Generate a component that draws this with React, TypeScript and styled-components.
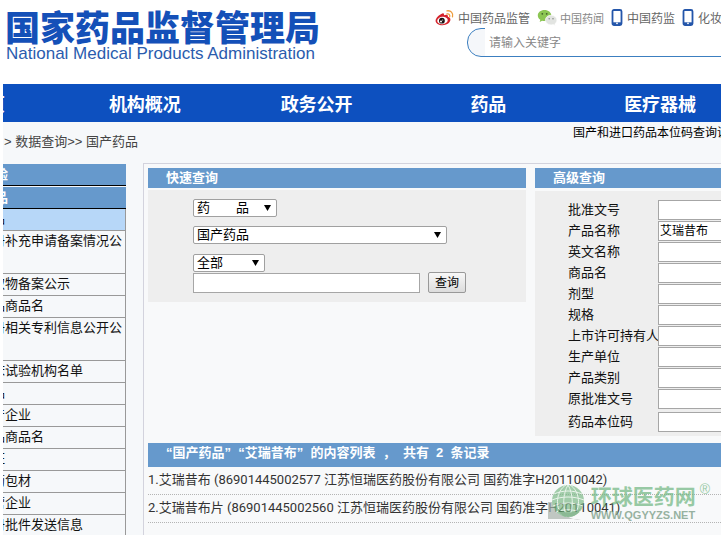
import React from "react";
import styled, { createGlobalStyle, css } from "styled-components";

const cjk = `"Noto Sans CJK SC", sans-serif`;

const GlobalStyle = createGlobalStyle`
  *, *::before, *::after { box-sizing: border-box; }
  html { overflow: hidden; }
  body {
    margin: 0;
    background: #fff;
    color: #222;
    font: 13px/20px Roboto, ${cjk};
  }
  a { color: inherit; text-decoration: none; }
  ul, ol { list-style: none; margin: 0; padding: 0; }
  h1, h2, p { margin: 0; }
  input, select, button { font: inherit; color: inherit; border-radius: 0; margin: 0; }
`;

const Page = styled.div`
  margin: 0 0 2px 3px;
  overflow: hidden;
`;

const Header = styled.header`
  display: flex;
  justify-content: space-between;
  height: 84px;
`;

const Brand = styled.a`
  display: block;
  padding: 7px 0 0 2px;
  white-space: nowrap;
`;

const BrandName = styled.h1`
  color: #1450b8;
  font: 900 35px/38px ${cjk};
`;

const BrandSub = styled.p`
  padding-left: 1px;
  color: #2a5cae;
  font: 17px/18px "Liberation Sans", sans-serif;
`;

const Tools = styled.div`
  flex: none;
  width: 286px;
  padding-top: 7px;
  overflow: hidden;
`;

const Social = styled.ul`
  display: flex;
  align-items: center;
  gap: 7px;
  height: 21px;
`;

const SocialLink = styled.a<{ $small?: boolean }>`
  display: flex;
  align-items: center;
  gap: ${(p) => (p.$small ? 2 : 4)}px;
  color: ${(p) => (p.$small ? "#888" : "#666")};
  font: ${(p) => (p.$small ? 11 : 12)}px/20px ${cjk};
  white-space: nowrap;
  svg { flex: none; display: block; }
`;

const SearchBox = styled.label`
  display: flex;
  height: 29px;
  margin: 0 -20px 0 32px;
  padding-left: 17px;
  border: 1px solid #3c7fc0;
  border-radius: 14px;
  background: #f5f7fa;
`;

const SearchInput = styled.input`
  flex: 1;
  min-width: 0;
  margin-top: -1px;
  padding: 0 4px;
  border: 0;
  background: #fff;
  font: 12px/20px ${cjk};
  &::placeholder { color: #888; opacity: 1; }
`;

const Nav = styled.nav`
  display: grid;
  grid-template-columns: 56px repeat(4, 1fr);
  height: 38px;
  margin-right: -25px;
  background: #0d50bf;
`;

const NavLink = styled.a<{ $cut?: boolean }>`
  color: #fff;
  font: bold 18px/38px ${cjk};
  text-align: center;
  white-space: nowrap;
  ${(p) => p.$cut && css`text-align: left; margin-left: -34px;`}
`;

const Content = styled.div`
  background: #f6f8fa;
`;

const TrailBar = styled.div`
  display: flex;
  justify-content: space-between;
  height: 41px;
`;

const Trail = styled.p`
  padding: 10px 0 0 1px;
  color: #444;
  font-family: "Liberation Sans", ${cjk};
  white-space: pre;
`;

const Notice = styled.a`
  flex: none;
  width: 148px;
  color: #000;
  font: 12px/20px ${cjk};
  white-space: nowrap;
`;

const Columns = styled.div`
  display: flex;
  align-items: stretch;
  gap: 17px;
`;

const Side = styled.nav`
  flex: none;
  width: 123px;
  padding-top: 1px;
  overflow: hidden;
`;

const SideHead = styled.h2`
  height: 22px;
  padding-right: 118px;
  border-bottom: 1px solid #000;
  background: #6699cc;
  color: #fff;
  font: bold 13px/20px ${cjk};
  direction: rtl;
  white-space: nowrap;
  & + & { margin-top: 1px; }
`;

const SideItem = styled.li<{ $active?: boolean; $tall?: boolean; $last?: boolean }>`
  height: ${(p) => (p.$tall ? 43 : p.$last ? 20 : 22)}px;
  border-right: 1px solid #999;
  border-bottom: ${(p) => (p.$last ? 0 : 1)}px solid #999;
  background: ${(p) => (p.$active ? "#b7d7f8" : "transparent")};
  color: #111;
  white-space: nowrap;
  line-height: 20px;
  a { display: block; margin-left: -11px; }
`;

const Main = styled.main`
  flex: 1;
  min-width: 0;
  padding: 4px 0 0 4px;
  border-top: 1px solid #d3d3dd;
  border-left: 1px solid #d3d3dd;
  background: #f8f9fa;
`;

const Panels = styled.div`
  display: flex;
  align-items: flex-start;
  gap: 9px;
  height: 275px;
`;

const Panel = styled.section<{ $narrow?: boolean }>`
  flex: ${(p) => (p.$narrow ? "0 0 186px" : "1")};
  min-width: 0;
`;

const PanelTitle = styled.h2<{ $results?: boolean }>`
  margin-bottom: ${(p) => (p.$results ? 0 : 2)}px;
  padding-left: 18px;
  background: #6699cc;
  color: #fff;
  font: bold 13px/20px "Liberation Sans", ${cjk};
  white-space: pre;
  ${(p) => p.$results && css`height: 24px;`}
`;

const QuickForm = styled.form`
  display: grid;
  justify-items: start;
  gap: 9px;
  height: 112px;
  padding: 9px 45px;
  background: #eee;
`;

const SelectWrap = styled.label<{ $width: number }>`
  display: grid;
  align-items: center;
  width: ${(p) => p.$width}px;
  height: 18px;
  border: 1px solid #a0a0a0;
  border-radius: 2px;
  background: #fff;
  > * { grid-area: 1 / 1; }
  svg { justify-self: end; margin-right: 5px; pointer-events: none; }
`;

const Select = styled.select`
  appearance: none;
  width: 100%;
  height: 16px;
  padding: 0 0 0 3px;
  border: 0;
  background: transparent;
  color: #000;
  line-height: 16px;
`;

const QuickRow = styled.div`
  display: flex;
  align-items: flex-end;
  gap: 8px;
  margin-top: -9px;
`;

const TextField = styled.input`
  height: 20px;
  padding: 0 1px;
  border: 1px solid #a6a6a6;
  background: #fff;
  color: #000;
  font-size: 12px;
`;

const QuickField = styled(TextField)`
  width: 227px;
`;

const Submit = styled.button`
  width: 38px;
  height: 21px;
  padding: 0;
  border: 1px solid #999;
  border-radius: 2px;
  background: linear-gradient(#f8f8f8, #dcdcdc);
  color: #000;
  font-size: 12px;
  line-height: 18px;
`;

const AdvancedForm = styled.form`
  margin-top: 3px;
  padding: 9px 0 3px;
  background: #eee;
`;

const FieldRow = styled.label<{ $last?: boolean }>`
  display: grid;
  grid-template-columns: 90px 1fr;
  margin: ${(p) => (p.$last ? 2 : 0)}px -20px 0 33px;
  height: 21px;
  color: #111;
  white-space: nowrap;
`;

const Results = styled.ol`
  li {
    height: 28px;
    border-bottom: 1px dotted #b4b4b4;
    color: #333;
    line-height: 26px;
    white-space: nowrap;
  }
`;

const ResultArea = styled.section`
  position: relative;
`;

const Watermark = styled.div`
  position: absolute;
  right: 11px;
  top: 40px;
  display: flex;
  opacity: 0.7;
  pointer-events: none;
  svg { display: block; margin-right: 6px; }
`;

const MarkName = styled.p`
  color: #6fb680;
  font: bold 21px/25px ${cjk};
`;

const MarkUrl = styled.p`
  color: #6f947a;
  font: bold 11px/15px "Liberation Sans", sans-serif;
`;

const MarkReg = styled.span`
  margin-left: 4px;
  color: #6fb680;
  font: 14px/12px "Liberation Sans", sans-serif;
`;

const WeiboIcon = () => (
  <svg width="19" height="18" viewBox="0 0 19 18" aria-hidden="true">
    <path d="M7.4 4.5C8.6 4 9.4 4.8 9 6.3c1.900-.8 4.300-.8 3.900 1.500 1.500.5 2.700 1.300 2.500 3.200-.3 3.100-4 5.200-7.900 5.200C3.600 16.200.6 14.400.6 11.700c0-2.500 3.700-6.200 6.800-7.200z" fill="#d5222b" />
    <ellipse cx="7.500" cy="11.500" rx="5.300" ry="3.700" fill="#fff" transform="rotate(-8 7.500 11.500)" />
    <circle cx="6.900" cy="11.700" r="2.900" fill="#1b1112" />
    <circle cx="6" cy="12.400" r="1" fill="#fff" />
    <circle cx="7.700" cy="11" r=".5" fill="#fff" />
    <path d="M12 4.900c1.800-.5 3.200.8 2.700 2.700M12 1.900c3.700-.8 6.500 2.200 5.500 5.900" fill="none" stroke="#ee9c3a" strokeWidth="1.300" strokeLinecap="round" />
  </svg>
);

const WechatIcon = () => (
  <svg width="21" height="18" viewBox="0 0 21 18" aria-hidden="true">
    <path d="M7.500 1C3.700 1 .8 3.400.8 6.500c0 1.800 1 3.300 2.500 4.300l-.6 2.100 2.400-1.200c3.300 1 9.200-.4 9.200-5.200C14.300 3.400 11.300 1 7.500 1z" fill="#8cc653" />
    <path d="M14.100 6.300c-3.300 0-5.700 2.100-5.700 4.800s2.400 4.800 5.700 4.800c.8 0 1.500-.1 2.200-.3l2 1.100-.5-1.800c1.300-.9 2.100-2.200 2.100-3.800 0-2.700-2.500-4.800-5.800-4.800z" fill="#e2e4e1" stroke="#fff" strokeWidth=".6" />
    <circle cx="5.300" cy="4.800" r=".9" fill="#41602b" />
    <circle cx="9.700" cy="4.800" r=".9" fill="#41602b" />
    <circle cx="12.200" cy="9.700" r=".8" fill="#8b8e89" />
    <circle cx="16" cy="9.700" r=".8" fill="#8b8e89" />
  </svg>
);

const PhoneIcon = () => (
  <svg width="12" height="17" viewBox="0 0 12 17" aria-hidden="true">
    <rect x="1.500" y="1" width="9" height="15" rx="1.500" fill="#fff" stroke="#2456aa" strokeWidth="1.800" />
    <path d="M2 13.300h8v2.200H2z" fill="#2456aa" />
    <circle cx="6" cy="14.300" r=".9" fill="#fff" />
  </svg>
);

const Arrow = () => (
  <svg width="7" height="6" viewBox="0 0 7 6" aria-hidden="true">
    <path d="M0 0h7L3.500 6z" fill="#000" />
  </svg>
);

const GlobeMark = () => (
  <svg width="38" height="39" viewBox="0 0 38 39" aria-hidden="true">
    <path d="M1 19v17h33c-9 2-18-3-21-17z" fill="#a9b2ab" />
    <circle cx="21" cy="18" r="16" fill="#7dba87" />
    <g fill="none" stroke="#e3f2e4" strokeWidth="1">
      <path d="M7 11c9-4 19-4 28 0M5 17c10-4 22-4 32 0M6 23c10-4 20-4 30 0M9 29c8-3 16-3 24 0" />
      <path d="M21 2c-5 8-6 23-1 32M21 2c5 8 6 23 1 32M19 2C9 8 8 24 15 32M23 2c10 6 11 22 4 30" />
    </g>
    <path d="M10 25c7 6 16 6 24 0-2 6-7 9-13 9-5 0-9-3-11-9z" fill="#5d9f6a" />
  </svg>
);

const sideItems: { text: string; active?: boolean; tall?: boolean; last?: boolean }[] = [
  { text: "品", active: true },
  { text: "册补充申请备案情况公", tall: true },
  { text: "取物备案公示" },
  { text: "品商品名" },
  { text: "册相关专利信息公开公", tall: true },
  { text: "床试验机构名单" },
  { text: "品" },
  { text: "产企业" },
  { text: "品商品名" },
  { text: "证" },
  { text: "药包材" },
  { text: "营企业" },
  { text: "册批件发送信息", last: true },
];

const fields = ["批准文号", "产品名称", "英文名称", "商品名", "剂型", "规格", "上市许可持有人", "生产单位", "产品类别", "原批准文号", "药品本位码"];

const results = [
  "1.艾瑞昔布 (86901445002577 江苏恒瑞医药股份有限公司 国药准字H20110042)",
  "2.艾瑞昔布片 (86901445002560 江苏恒瑞医药股份有限公司 国药准字H20110041)",
];

function Dropdown({ label, width, option }: { label: string; width: number; option: string }) {
  return (
    <SelectWrap $width={width}>
      <Select aria-label={label}>
        <option>{option}</option>
      </Select>
      <Arrow />
    </SelectWrap>
  );
}

export default function App() {
  return (
    <Page>
      <GlobalStyle />
      <Header>
        <Brand href="#">
          <BrandName>国家药品监督管理局</BrandName>
          <BrandSub>National Medical Products Administration</BrandSub>
        </Brand>
        <Tools>
          <Social>
            <li><SocialLink href="#"><WeiboIcon />中国药品监管</SocialLink></li>
            <li><SocialLink href="#" $small><WechatIcon />中国药闻</SocialLink></li>
            <li><SocialLink href="#"><PhoneIcon />中国药监</SocialLink></li>
            <li><SocialLink href="#"><PhoneIcon />化妆品监管</SocialLink></li>
          </Social>
          <SearchBox>
            <SearchInput type="text" aria-label="搜索" placeholder="请输入关键字" />
          </SearchBox>
        </Tools>
      </Header>
      <Nav>
        <NavLink href="#" $cut>首页</NavLink>
        <NavLink href="#">机构概况</NavLink>
        <NavLink href="#">政务公开</NavLink>
        <NavLink href="#">药品</NavLink>
        <NavLink href="#">医疗器械</NavLink>
      </Nav>
      <Content>
        <TrailBar>
          <Trail>&gt; <a href="#">数据查询</a>&gt;&gt; <a href="#">国产药品</a></Trail>
          <Notice href="#">国产和进口药品本位码查询说明</Notice>
        </TrailBar>
        <Columns>
          <Side>
            <SideHead>验</SideHead>
            <SideHead>品</SideHead>
            <ul>
              {sideItems.map((item, i) => (
                <SideItem key={i} $active={item.active} $tall={item.tall} $last={item.last}>
                  <a href="#">{item.text}</a>
                </SideItem>
              ))}
            </ul>
          </Side>
          <Main>
            <Panels>
              <Panel>
                <PanelTitle>快速查询</PanelTitle>
                <QuickForm>
                  <Dropdown label="类别" width={84} option="药　　品" />
                  <Dropdown label="数据库" width={254} option="国产药品" />
                  <Dropdown label="范围" width={72} option="全部" />
                  <QuickRow>
                    <QuickField type="text" aria-label="关键字" />
                    <Submit type="button">查询</Submit>
                  </QuickRow>
                </QuickForm>
              </Panel>
              <Panel $narrow>
                <PanelTitle>高级查询</PanelTitle>
                <AdvancedForm>
                  {fields.map((name, i) => (
                    <FieldRow key={name} $last={i === fields.length - 1}>
                      {name}
                      <TextField type="text" defaultValue={name === "产品名称" ? "艾瑞昔布" : ""} />
                    </FieldRow>
                  ))}
                </AdvancedForm>
              </Panel>
            </Panels>
            <ResultArea>
              <PanelTitle $results>{"“国产药品”  “艾瑞昔布”  的内容列表  ，  共有  2  条记录"}</PanelTitle>
              <Results>
                {results.map((text) => (
                  <li key={text}><a href="#">{text}</a></li>
                ))}
              </Results>
              <Watermark>
                <GlobeMark />
                <div>
                  <MarkName>环球医药网</MarkName>
                  <MarkUrl>WWW.QGYYZS.NET</MarkUrl>
                </div>
                <MarkReg>®</MarkReg>
              </Watermark>
            </ResultArea>
          </Main>
        </Columns>
      </Content>
    </Page>
  );
}
